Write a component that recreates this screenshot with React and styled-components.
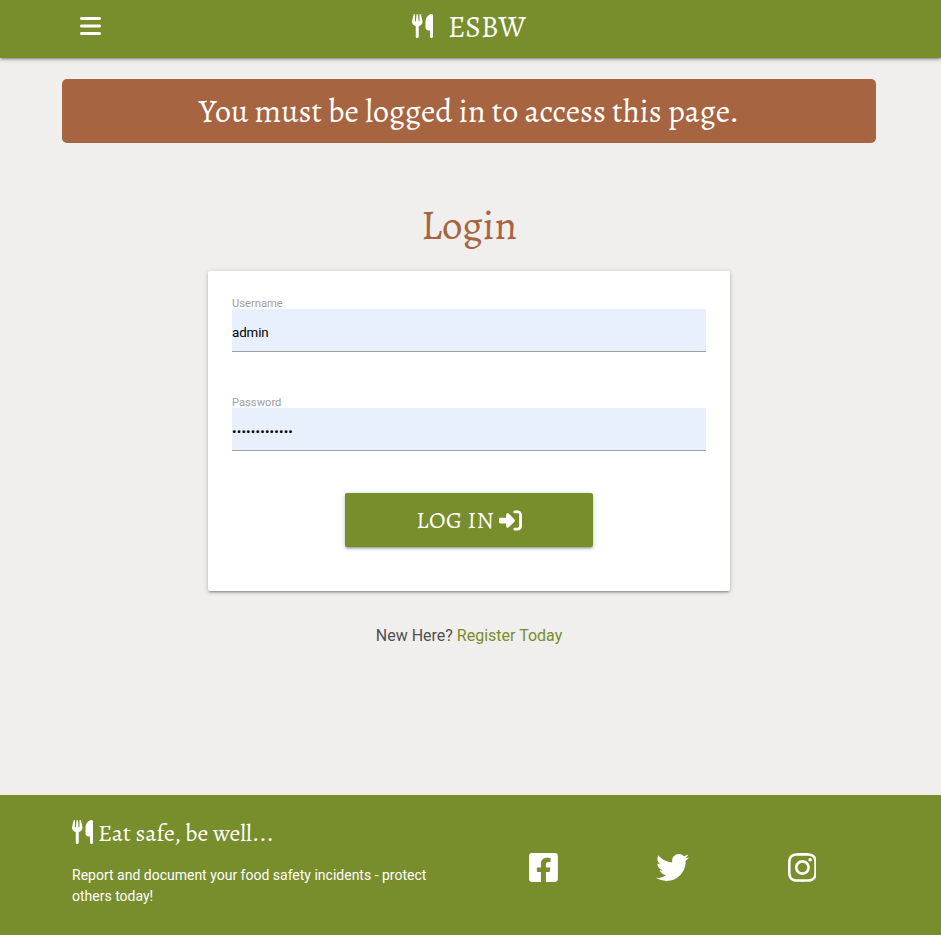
import React from "react";
import styled, { createGlobalStyle, css } from "styled-components";
import { FaBars, FaRightToBracket, FaUtensils } from "react-icons/fa6";
import { FaFacebookSquare, FaInstagram, FaTwitter } from "react-icons/fa";

const GREEN = "#788d2b";
const BROWN = "#a66540";

const GlobalStyle = createGlobalStyle`
  *, *::before, *::after { box-sizing: border-box; }
  body {
    margin: 0;
    background: #f0efed;
    font-family: Roboto, sans-serif;
    color: #505050;
  }
`;

const raised = css`
  box-shadow: 0 2px 2px 0 rgba(0, 0, 0, 0.14), 0 3px 1px -2px rgba(0, 0, 0, 0.12),
    0 1px 5px 0 rgba(0, 0, 0, 0.2);
`;

const serif = css`
  font-family: Alegreya, "Liberation Serif", serif;
  font-weight: 400;
  white-space: nowrap;
`;

const Page = styled.div`
  display: flex;
  flex-direction: column;
  height: 935px;
`;

const NavBar = styled.nav`
  display: grid;
  grid-template-columns: 1fr auto 1fr;
  align-items: center;
  height: 58px;
  padding: 0 82px 6px 80px;
  flex: none;
  background: ${GREEN};
  color: #fff;
  ${raised}
`;

const MenuButton = styled.button`
  display: flex;
  width: 21px;
  padding: 0;
  border: 0;
  background: none;
  color: inherit;
`;

const Brand = styled.a`
  ${serif}
  display: flex;
  align-items: center;
  gap: 15px;
  width: 115px;
  height: 52px;
  font-size: 29.4px;
  line-height: 50px;
`;

const BrandName = styled.span`
  padding-top: 2px;
`;

const Glyph = styled.svg`
  flex: none;
  height: ${(p) => p.$size}px;
  width: ${(p) => p.$size * (p.$ratio ?? 0.875)}px;
`;

const Main = styled.main`
  display: flex;
  flex-direction: column;
  align-items: center;
  flex: 1;
  padding: 21px 65px 0 62px;
`;

const Notice = styled.div`
  ${serif}
  display: flex;
  justify-content: center;
  width: 100%;
  height: 64px;
  border-radius: 5px;
  background: ${BROWN};
  color: #fff;
  font-size: 32px;
  line-height: 64px;
`;

const Heading = styled.h1`
  ${serif}
  margin: 58px 0 22px;
  color: ${BROWN};
  font-size: 41px;
  line-height: 48px;
`;

const Card = styled.form`
  display: flex;
  flex-direction: column;
  width: 522px;
  height: 320px;
  padding: 26px 24px;
  border-radius: 2px;
  background: #fff;
  ${raised}
`;

const Field = styled.label`
  display: flex;
  flex-direction: column;
  height: 99px;
`;

const FieldName = styled.span`
  height: 12px;
  color: #9e9e9e;
  font-size: 11.2px;
  line-height: 13px;
`;

const FieldInput = styled.input`
  width: 100%;
  height: 43px;
  padding: ${(p) => (p.type === "password" ? 4 : 5)}px 0 0;
  border: 0;
  border-bottom: 1px solid #9e9e9e;
  border-radius: 0;
  outline: 0;
  background: #e8f0fe;
  color: #000;
  font: 13.333px Roboto, sans-serif;
  letter-spacing: ${(p) => (p.type === "password" ? 0.2 : -0.1)}px;
`;

const SubmitButton = styled.button`
  ${serif}
  display: flex;
  align-items: center;
  justify-content: center;
  align-self: center;
  gap: 4.5px;
  width: 248px;
  height: 54px;
  margin-top: -2px;
  padding: 0;
  border: 0;
  border-radius: 2px;
  background: ${GREEN};
  color: #fff;
  font-size: 24px;
  letter-spacing: 0.4px;
  flex: none;
  ${raised}
`;

const Register = styled.p`
  margin: 33px 0 0;
  font-size: 16px;
  line-height: 24px;
`;

const RegisterLink = styled.a`
  color: ${GREEN};
`;

const Footer = styled.footer`
  display: flex;
  flex: none;
  height: 140px;
  padding: 20px 72px 0;
  background: ${GREEN};
  color: #fff;
`;

const About = styled.section`
  width: 407px;
`;

const Slogan = styled.h2`
  ${serif}
  display: flex;
  align-items: center;
  gap: 5px;
  height: 34px;
  margin: 0 0 16px;
  font-size: 24px;
`;

const SloganText = styled.span`
  padding-top: 2px;
`;

const Blurb = styled.p`
  width: 370px;
  margin: 0;
  font-size: 14px;
  font-weight: 400;
  line-height: 21px;
`;

const Social = styled.div`
  display: grid;
  grid-template-columns: repeat(3, 129.2px);
  align-items: center;
  justify-items: center;
  height: 104px;
`;

const SocialLink = styled.a`
  display: flex;
`;

export default function App() {
  return (
    <>
      <GlobalStyle />
      <Page>
        <NavBar>
          <MenuButton aria-label="Menu">
            <Glyph as={FaBars} $size={24} />
          </MenuButton>
          <Brand>
            <Glyph as={FaUtensils} $size={24} />
            <BrandName>ESBW</BrandName>
          </Brand>
        </NavBar>
        <Main>
          <Notice>You must be logged in to access this page.</Notice>
          <Heading>Login</Heading>
          <Card>
            <Field>
              <FieldName>Username</FieldName>
              <FieldInput type="text" defaultValue="admin" />
            </Field>
            <Field>
              <FieldName>Password</FieldName>
              <FieldInput type="password" defaultValue="adminpassword" />
            </Field>
            <SubmitButton type="button">
              <span>LOG IN</span>
              <Glyph as={FaRightToBracket} $size={23} $ratio={1} />
            </SubmitButton>
          </Card>
          <Register>
            New Here? <RegisterLink>Register Today</RegisterLink>
          </Register>
        </Main>
        <Footer>
          <About>
            <Slogan>
              <Glyph as={FaUtensils} $size={24} />
              <SloganText>Eat safe, be well...</SloganText>
            </Slogan>
            <Blurb>Report and document your food safety incidents - protect others today!</Blurb>
          </About>
          <Social>
            <SocialLink aria-label="Facebook"><Glyph as={FaFacebookSquare} $size={33} /></SocialLink>
            <SocialLink aria-label="Twitter"><Glyph as={FaTwitter} $size={33} $ratio={1} /></SocialLink>
            <SocialLink aria-label="Instagram"><Glyph as={FaInstagram} $size={33} /></SocialLink>
          </Social>
        </Footer>
      </Page>
    </>
  );
}
